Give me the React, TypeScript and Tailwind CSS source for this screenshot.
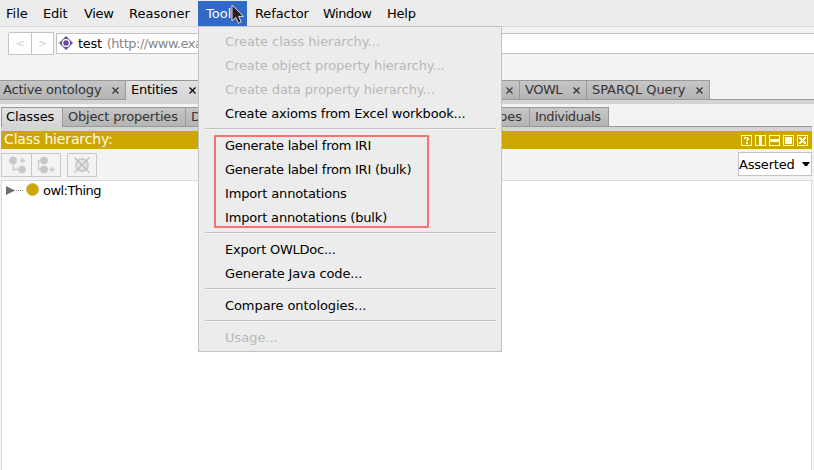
import React from "react";

const menus = [
  { label: "File", cls: "w-[37px]" },
  { label: "Edit", cls: "w-[41px] tracking-[-0.2px]" },
  { label: "View", cls: "w-[45px] tracking-[-0.3px]" },
  { label: "Reasoner", cls: "w-[69px]" },
  { label: "Tools", cls: "w-[49px] mr-2 bg-[#3069c6] text-white pl-2" },
  { label: "Refactor", cls: "w-[68px] tracking-[-0.1px]" },
  { label: "Window", cls: "w-[64px] tracking-[-0.5px]" },
  { label: "Help", cls: "w-[40px] tracking-[-0.2px]" },
];

type Entry = { label: string; cls: string } | null;

const entries: Entry[] = [
  { label: "Create class hierarchy...", cls: "text-[#b8b8b8] tracking-[-0.03px]" },
  { label: "Create object property hierarchy...", cls: "text-[#b8b8b8] tracking-[-0.1px]" },
  { label: "Create data property hierarchy...", cls: "text-[#b8b8b8] tracking-[-0.08px]" },
  { label: "Create axioms from Excel workbook...", cls: "tracking-[-0.17px]" },
  null,
  { label: "Generate label from IRI", cls: "tracking-[-0.24px]" },
  { label: "Generate label from IRI (bulk)", cls: "tracking-[-0.24px]" },
  { label: "Import annotations", cls: "tracking-[-0.15px]" },
  { label: "Import annotations (bulk)", cls: "tracking-[-0.17px]" },
  null,
  { label: "Export OWLDoc...", cls: "tracking-[-0.25px]" },
  { label: "Generate Java code...", cls: "tracking-[-0.14px]" },
  null,
  { label: "Compare ontologies...", cls: "tracking-[-0.08px]" },
  null,
  { label: "Usage...", cls: "text-[#b8b8b8]" },
];

function Cross() {
  return (
    <svg width="7" height="7" viewBox="0 0 7 7" className="mt-px shrink-0" stroke="currentColor" strokeWidth="1.2">
      <path d="M.5 .5 6.5 6.5M6.5 .5.5 6.5" />
    </svg>
  );
}

function Tab({ label, cls, active, close }: { label: string; cls: string; active?: boolean; close?: boolean }) {
  return (
    <div
      className={
        "flex h-5 shrink-0 items-center justify-between overflow-hidden border-t border-r border-[#999] bg-linear-to-b " +
        (active
          ? "from-[#e2e2e2] to-[#d4d4d4] pb-[2px] text-black "
          : "border-b from-[#c6c6c6] to-[#b4b4b4] pb-px text-[#333] ") +
        cls
      }
    >
      <span>{label}</span>
      {close && <Cross />}
    </div>
  );
}

function ToolMenu() {
  return (
    <div className="absolute left-[198px] top-[26px] h-[326px] w-[304px] border border-[#c2c2c2] bg-[#ececec] pt-[2px]">
      {entries.map((e, i) =>
        e ? (
          <div key={i} className={"flex h-6 items-center pl-[26px] " + e.cls}>
            {e.label}
          </div>
        ) : (
          <div key={i} className="h-2 pt-[3px] pr-[5px] pl-[6px]">
            <div className="h-[2px] border-t border-[#c2c2c2] bg-[#f6f6f6]" />
          </div>
        )
      )}
      <div className="absolute left-[15px] top-[108px] h-[93px] w-[215px] rounded-[1px] border-2 border-[#f77272]" />
    </div>
  );
}

function Cursor() {
  return (
    <svg className="absolute left-[231px] top-[4px]" width="14" height="21" viewBox="0 0 14 21">
      <path d="M1 1V17L4.8 13.5 7.4 19.2 10.2 18 7.7 12.4H12.7Z" fill="#222" stroke="#dcdcdc" strokeWidth="1" />
    </svg>
  );
}

function HeaderIcons() {
  return (
    <svg width="67" height="11" viewBox="0 0 67 11" fill="none" stroke="#fffbe8" shapeRendering="crispEdges">
      <rect x=".5" y=".5" width="10" height="10" />
      <rect x="14.5" y=".5" width="10" height="10" />
      <rect x="28.5" y=".5" width="10" height="10" />
      <rect x="42.5" y=".5" width="10" height="10" />
      <rect x="56.5" y=".5" width="10" height="10" />
      <g fill="#fffbe8" stroke="none">
        <path d="M3 2H7V3H3ZM3 3H5V4H3ZM6 3H8V5H6ZM5 5H7V6H5ZM5 7H7V9H5Z" />
        <path d="M18 1H21V10H18ZM29 4H38V7H29ZM44 2H51V9H44Z" />
        <path d="M58 2H60V3H61V4H62V3H63V2H65V4H64V5H63V6H64V7H65V9H63V8H62V7H61V8H60V9H58V7H59V6H60V5H59V4H58Z" />
      </g>
    </svg>
  );
}

const toolBox = "flex h-6 items-center justify-center border border-[#c8c8c8]";

export default function App() {
  return (
    <div className="relative flex h-[470px] w-[814px] flex-col overflow-hidden bg-[#f3f3f3] font-['DejaVu_Sans',sans-serif] text-[13px] leading-none whitespace-nowrap text-black">
      <div className="flex h-[27px] shrink-0 border-b border-[#d6d6d6] bg-[#ececec] pt-px pl-[6px]">
        {menus.map((m) => (
          <div key={m.label} className={"flex shrink-0 items-center " + m.cls}>
            {m.label}
          </div>
        ))}
      </div>

      <div className="flex h-[53px] shrink-0 items-start pt-[5px] pl-2">
        <div className="flex h-[23px] w-6 items-center justify-center rounded-tl-[2px] border border-[#c4c4c4] bg-white text-[11px] text-[#d0d0d0]">
          &lt;
        </div>
        <div className="-ml-px flex h-[23px] w-[23px] items-center justify-center border border-[#c4c4c4] bg-white text-[11px] text-[#d0d0d0]">
          &gt;
        </div>
        <div className="mt-px ml-[2px] flex h-[21px] flex-1 items-center border border-r-0 border-[#c2c2c2] bg-white pl-[2px]">
          <svg width="14" height="14" viewBox="0 0 14 14" className="-mt-px">
            <path d="M7 0 14 7 7 14 0 7Z" fill="#6a4a9c" />
            <circle cx="7" cy="7" r="3.4" fill="none" stroke="#fff" strokeWidth="1.3" />
          </svg>
          <span className="ml-[5px] tracking-[-0.3px]">test</span>
          <span className="ml-[5px] tracking-[-0.5px] text-[#888]">(http://www.exa</span>
        </div>
      </div>

      <div className="flex h-5 shrink-0 border-b border-[#999]">
        <Tab label="Active ontology" cls="w-[126px] pl-[3px] pr-[6px] tracking-[-0.18px]" close />
        <Tab label="Entities" cls="w-[74px] pl-[5px] pr-[3px] tracking-[-0.25px]" active close />
        <Tab label="" cls="w-[320px] pr-[6px]" close />
        <Tab label="VOWL" cls="w-[67px] pl-[5px] pr-[6px] tracking-[-0.5px]" close />
        <Tab label="SPARQL Query" cls="w-[123px] pl-[5px] pr-[6px] tracking-[-0.08px]" close />
      </div>
      <div className="h-1 shrink-0 bg-[#d4d4d4]" />

      <div className="mt-[3px] ml-px flex h-5 w-[811px] shrink-0 border-b border-l border-[#999]">
        <Tab label="Classes" cls="w-[61px] pl-1 tracking-[-0.1px]" active />
        <Tab label="Object properties" cls="w-[123px] pl-[5px] tracking-[-0.18px]" />
        <Tab label="D" cls="w-[200px] pl-[5px]" />
        <Tab label="pes" cls="w-[144px] justify-end pr-[7px]" />
        <Tab label="Individuals" cls="w-[79px] pl-[5px] tracking-[-0.4px]" />
      </div>
      <div className="ml-px h-1 w-[811px] shrink-0 bg-[#d4d4d4]" />

      <div className="ml-px flex h-[18px] w-[811px] shrink-0 items-center justify-between bg-[#cea600] pr-1 pl-[3px] text-[14px] text-[#fffbe0]">
        <span className="-mt-[2px] tracking-[-0.15px]">Class hierarchy:</span>
        <HeaderIcons />
      </div>

      <div className="ml-px flex h-[31px] w-[811px] shrink-0 items-start pt-1">
        <div className={toolBox + " w-[31px]"}>
          <svg width="18" height="18" viewBox="0 0 18 18" fill="#c8c8c8" stroke="#c8c8c8">
            <circle cx="5" cy="4.5" r="3.5" />
            <circle cx="14" cy="13.5" r="3.5" />
            <path d="M5.5 8V13.5H11M12 4.5H17M14.5 2V7" fill="none" strokeWidth="1.4" />
          </svg>
        </div>
        <div className={toolBox + " -ml-px w-[30px]"}>
          <svg width="18" height="18" viewBox="0 0 18 18" fill="#c8c8c8" stroke="#c8c8c8">
            <circle cx="7" cy="4.5" r="3.5" />
            <circle cx="7" cy="13.5" r="3.5" />
            <path d="M5 4.5H1.5V13.5H5M12 13.5H18M15 11V16" fill="none" strokeWidth="1.4" />
          </svg>
        </div>
        <div className={toolBox + " ml-[6px] w-[30px]"}>
          <svg width="18" height="18" viewBox="0 0 18 18" fill="none" stroke="#cbcbcb">
            <circle cx="9" cy="9" r="6" fill="#e6e6e6" strokeWidth="2" />
            <path d="M1.5 1.5 16.5 16.5M16.5 1.5 1.5 16.5" stroke="#bcbcbc" strokeWidth="1.3" />
          </svg>
        </div>
        <div className="ml-auto -mt-px flex h-6 w-[74px] items-center justify-between border border-[#c4c4c4] bg-white pr-px">
          <span className="tracking-[-0.2px]">Asserted</span>
          <svg width="8" height="4" viewBox="0 0 8 4">
            <path d="M0 0H8L5 4H3Z" />
          </svg>
        </div>
      </div>

      <div className="ml-px flex w-[811px] flex-1 items-start border border-b-0 border-[#dadada] bg-white pt-[2px] pl-1">
        <svg width="17" height="15" viewBox="0 0 17 15">
          <path d="M0 3V12L9 7.5Z" fill="#6e6e6e" />
          <path d="M8 7.5H17" stroke="#888" strokeDasharray="1 1" />
        </svg>
        <div className="ml-[3px] size-[13px] rounded-full border border-[#c9b46a] bg-[#cea600]" />
        <span className="mt-px ml-1 tracking-[-0.55px]">owl:Thing</span>
      </div>

      <ToolMenu />
      <Cursor />
    </div>
  );
}
